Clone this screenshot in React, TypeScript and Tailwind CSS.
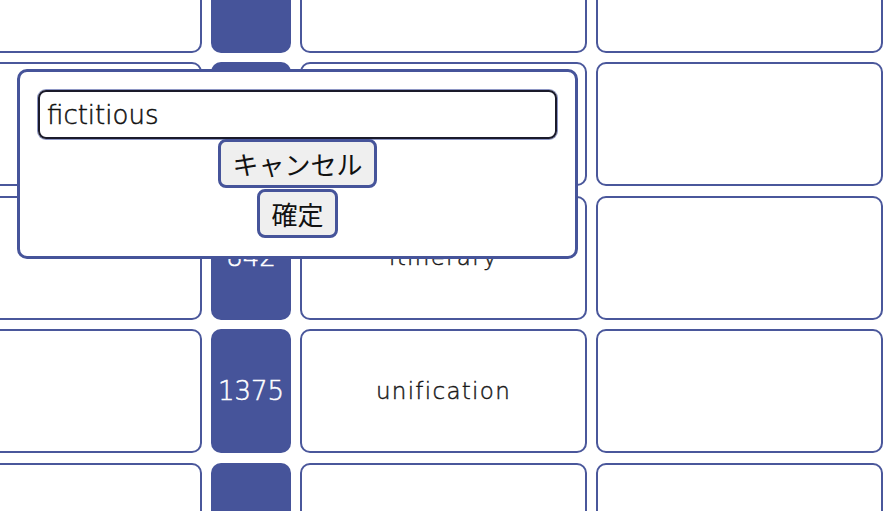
import { useState } from 'react';

interface Row {
  num: string;
  word: string;
}

const rows: Row[] = [
  { num: '', word: '' },
  { num: '517', word: 'fictitious' },
  { num: '842', word: 'itinerary' },
  { num: '1375', word: 'unification' },
  { num: '', word: '' },
];

const latin = { fontFamily: '"DejaVu Sans", "Noto Sans CJK JP", sans-serif' };

function WordRow({ num, word }: Row) {
  return (
    <div className="flex gap-[9px] h-[124px] shrink-0">
      <div className="w-[288px] shrink-0 rounded-[10px] border-2 border-[#4a579b] bg-white" />
      <div
        className="w-[80px] shrink-0 rounded-[10px] bg-[#46549a] flex items-center justify-center text-white text-[26px] font-extralight [-webkit-text-stroke:0.5px_white]"
        style={latin}
      >
        {num}
      </div>
      <div
        className="w-[287px] shrink-0 rounded-[10px] border-2 border-[#4a579b] bg-white flex items-center justify-center text-[23px] tracking-[1.3px] font-extralight text-[#1a1a1a] [-webkit-text-stroke:0.45px_#1a1a1a]"
        style={latin}
      >
        {word}
      </div>
      <div className="w-[287px] shrink-0 rounded-[10px] border-2 border-[#4a579b] bg-white" />
    </div>
  );
}

export default function App() {
  const [value, setValue] = useState('fictitious');

  return (
    <div
      className="relative w-[894px] h-[511px] overflow-hidden bg-white"
      style={{ fontFamily: '"Noto Sans CJK JP", "Noto Sans", sans-serif' }}
    >
      <div className="flex flex-col gap-[9.5px] mt-[-71.5px] ml-[-86px]">
        {rows.map((r, i) => (
          <WordRow key={i} {...r} />
        ))}
      </div>

      <div className="absolute left-[17px] top-[69px] w-[561px] h-[190px] rounded-[10px] border-[3px] border-[#46549a] bg-white px-[18px] pt-[18px] flex flex-col items-center">
        <input
          value={value}
          onChange={(e) => setValue(e.target.value)}
          className="w-[519px] h-[49px] shrink-0 rounded-[8px] border-2 border-[#1a1a2a] px-[7px] text-[26px] font-extralight text-[#111] [-webkit-text-stroke:0.5px_#111] outline-none shadow-[0_0_0_1px_#8d96c4]"
          style={latin}
        />
        <button className="h-[49px] px-[11px] rounded-[8px] border-[3px] border-[#46549a] bg-[#efefef] text-[26px] text-[#111] leading-none">
          キャンセル
        </button>
        <button className="h-[49px] px-[11px] mt-[1px] rounded-[8px] border-[3px] border-[#46549a] bg-[#efefef] text-[26px] text-[#111] leading-none">
          確定
        </button>
      </div>
    </div>
  );
}
